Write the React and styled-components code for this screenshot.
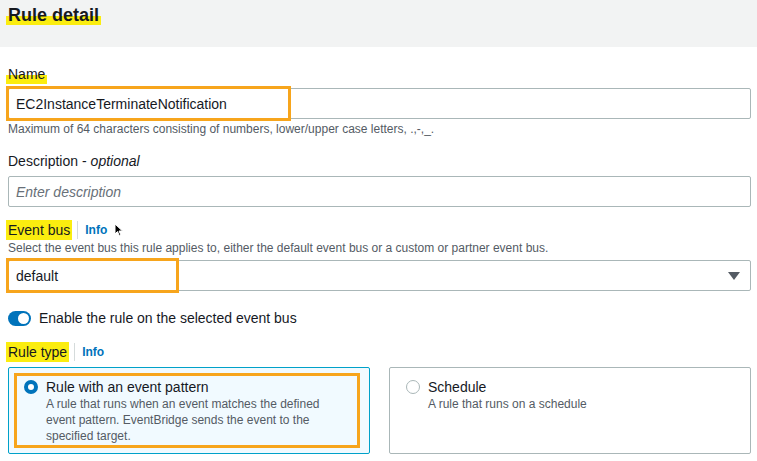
import React from 'react';
import styled, { createGlobalStyle, css } from 'styled-components';

const GlobalStyle = createGlobalStyle`
  body {
    margin: 0;
    background: #fff;
    font-family: "Liberation Sans", Arial, sans-serif;
    color: #16191f;
  }
`;

const Page = styled.div`
  width: 757px;
  height: 461px;
  overflow: hidden;
  position: relative;
`;

const Header = styled.div`
  height: 47px;
  background: #f2f3f3;
  padding: 4px 0 0 8px;
  box-sizing: border-box;
`;

const Title = styled.h2`
  margin: 0;
  font-size: 18px;
  font-weight: 700;
  line-height: 22px;
`;

const Mark = styled.span`
  padding: 0 2px;
  margin: 0 -2px;
  ${(p) =>
    p.$low
      ? css`background: linear-gradient(transparent 55%, #fbed0f 55%);`
      : css`background: #fbed0f;`}
`;

const Form = styled.div`
  padding: 0 6px 0 8px;
`;

const Label = styled.div`
  display: flex;
  align-items: center;
  font-size: 14px;
  line-height: 20px;
  margin-top: ${(p) => p.$top || 0}px;
`;

const Optional = styled.i`
  margin-left: 4px;
`;

const InfoLink = styled.span`
  margin-left: 7px;
  padding-left: 7px;
  border-left: 1px solid #d5dbdb;
  color: #0073bb;
  font-weight: 700;
  font-size: 12px;
  line-height: 18px;
`;

const Hint = styled.div`
  font-size: 12px;
  line-height: 16px;
  color: #545b64;
  margin-top: ${(p) => p.$top || 0}px;
`;

const Field = styled.div`
  position: relative;
  height: 31px;
  margin-top: ${(p) => p.$top || 0}px;
  border: 1px solid #aab7b8;
  border-radius: 2px;
  box-sizing: border-box;
  display: flex;
  align-items: center;
  padding: 0 8px 0 7px;
  font-size: 14px;
  ${(p) =>
    p.$placeholder &&
    css`
      color: #687078;
      font-style: italic;
    `}
`;

const Callout = styled.div`
  position: absolute;
  left: -3px;
  top: -3px;
  bottom: -3px;
  width: ${(p) => p.$w}px;
  border: 3px solid #f7a51c;
  box-sizing: border-box;
  pointer-events: none;
`;

const Caret = styled.span`
  margin-left: auto;
  width: 0;
  height: 0;
  border-left: 6px solid transparent;
  border-right: 6px solid transparent;
  border-top: 8px solid #545b64;
  margin-right: 2px;
`;

const ToggleRow = styled.div`
  display: flex;
  align-items: center;
  gap: 8px;
  margin-top: 17px;
  font-size: 14px;
  line-height: 20px;
`;

const Toggle = styled.span`
  width: 23px;
  height: 15px;
  border-radius: 8px;
  background: #0073bb;
  position: relative;
  &::after {
    content: '';
    position: absolute;
    right: 2px;
    top: 2px;
    width: 11px;
    height: 11px;
    border-radius: 50%;
    background: #fff;
  }
`;

const Tiles = styled.div`
  display: grid;
  grid-template-columns: 362px 362px;
  gap: 19px;
  margin-top: 5px;
`;

const Tile = styled.div`
  position: relative;
  height: 87px;
  box-sizing: border-box;
  border: 1px solid ${(p) => (p.$active ? '#00a1c9' : '#aab7b8')};
  background: ${(p) => (p.$active ? '#f1faff' : '#fff')};
  border-radius: 2px;
  padding: 10px 14px 0 ${(p) => (p.$active ? 15 : 16)}px;
  display: flex;
  gap: 8px;
`;

const TileCallout = styled.div`
  position: absolute;
  inset: 5px 9px 5px 5px;
  border: 3px solid #f7a51c;
  pointer-events: none;
`;

const Radio = styled.span`
  flex: none;
  width: 14px;
  height: 14px;
  margin-top: 2px;
  border-radius: 50%;
  box-sizing: border-box;
  ${(p) =>
    p.$checked
      ? css`border: 4px solid #0073bb; background: #fff;`
      : css`border: 1px solid #aab7b8; background: #fff;`}
`;

const TileTitle = styled.div`
  font-size: 14px;
  line-height: 18px;
`;

const TileText = styled.div`
  font-size: 12px;
  line-height: 16px;
  color: #545b64;
  max-width: 290px;
`;

const Cursor = styled.svg`
  position: absolute;
  left: 114px;
  top: 223px;
`;

export default function App() {
  return (
    <Page>
      <GlobalStyle />
      <Header>
        <Title>
          <Mark $low>Rule detail</Mark>
        </Title>
      </Header>
      <Form>
        <Label $top={17}>
          <Mark $low>Name</Mark>
        </Label>
        <Field $top={4}>
          EC2InstanceTerminateNotification
          <Callout $w={285} />
        </Field>
        <Hint $top={2}>Maximum of 64 characters consisting of numbers, lower/upper case letters, .,-,_.</Hint>
        <Label $top={14}>
          Description - <Optional>optional</Optional>
        </Label>
        <Field $top={5} $placeholder>
          Enter description
        </Field>
        <Label $top={13}>
          <Mark>Event bus</Mark>
          <InfoLink>Info</InfoLink>
        </Label>
        <Hint>Select the event bus this rule applies to, either the default event bus or a custom or partner event bus.</Hint>
        <Field $top={4}>
          default
          <Callout $w={173} />
          <Caret />
        </Field>
        <ToggleRow>
          <Toggle />
          Enable the rule on the selected event bus
        </ToggleRow>
        <Label $top={14}>
          <Mark>Rule type</Mark>
          <InfoLink>Info</InfoLink>
        </Label>
        <Tiles>
          <Tile $active>
            <TileCallout />
            <Radio $checked />
            <div>
              <TileTitle>Rule with an event pattern</TileTitle>
              <TileText>
                A rule that runs when an event matches the defined event pattern. EventBridge sends the event to the
                specified target.
              </TileText>
            </div>
          </Tile>
          <Tile>
            <Radio />
            <div>
              <TileTitle>Schedule</TileTitle>
              <TileText>A rule that runs on a schedule</TileText>
            </div>
          </Tile>
        </Tiles>
      </Form>
      <Cursor width="10" height="14" viewBox="0 0 10 14">
        <path d="M1 1 L1 11 L3.5 8.5 L5.5 13 L7 12.3 L5 8 L8.5 8 Z" fill="#000" stroke="#fff" strokeWidth="1" />
      </Cursor>
    </Page>
  );
}
